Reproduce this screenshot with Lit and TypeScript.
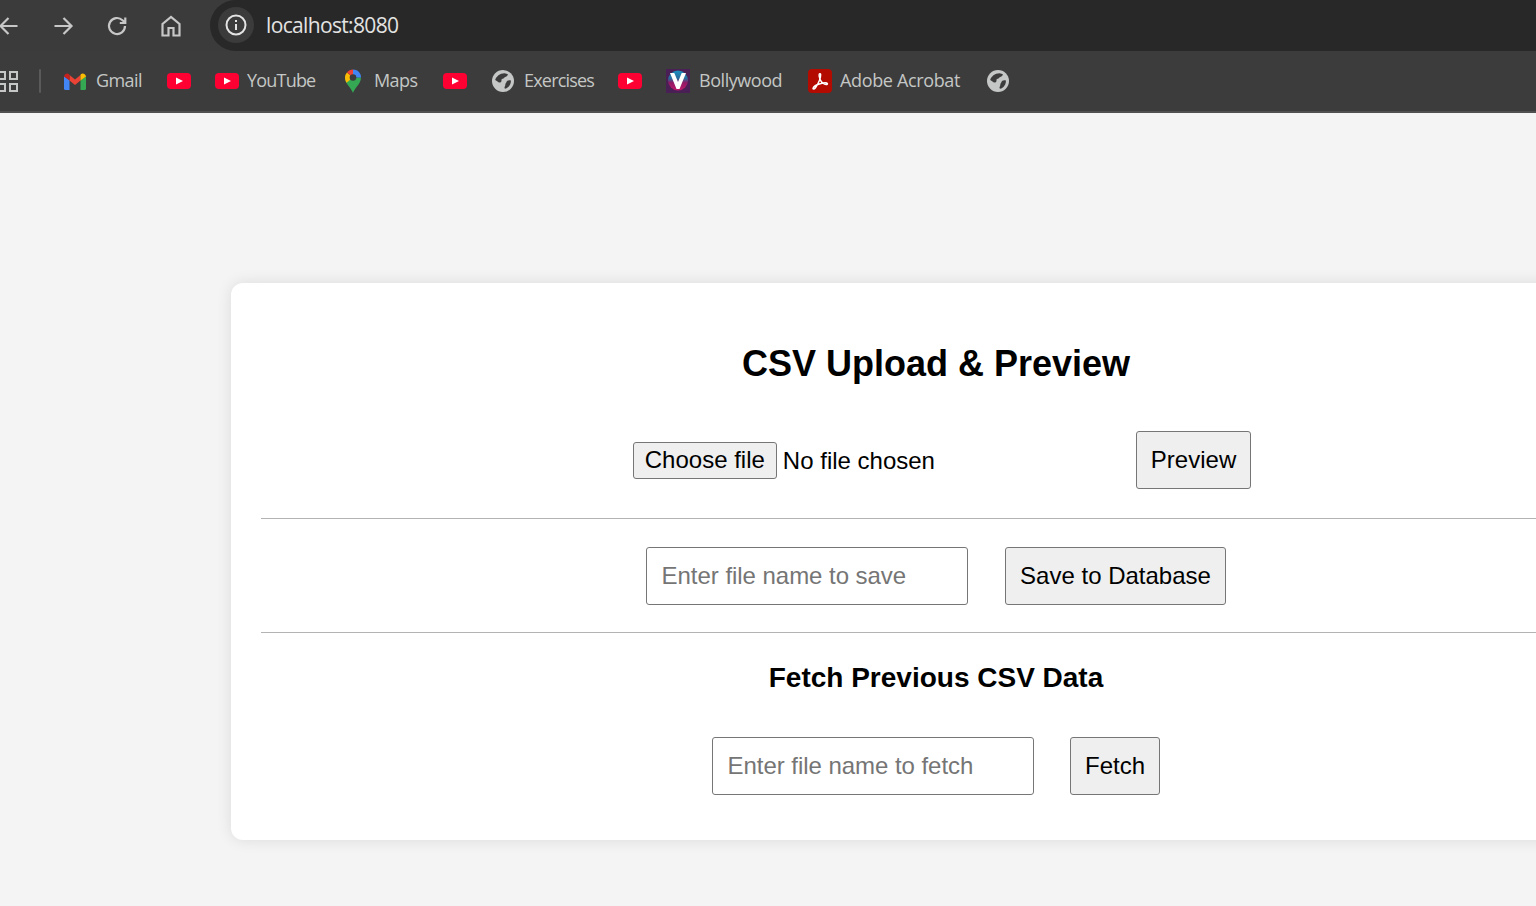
import { LitElement, html, css } from "lit";
import { customElement } from "lit/decorators.js";

const yt = html`<svg class="ic" width="24" height="16" viewBox="0 0 24 16"><rect width="24" height="16" rx="4" fill="#ff0033"/><path d="M9 4.500l7 3.500-7 3.500z" fill="#fff"/></svg>`;
const globe = html`<svg class="ic" width="22" height="22" viewBox="0 0 22 22"><circle cx="11" cy="11" r="11" fill="#c4c7c5"/><path d="M3.200 10C4 6.500 8 3.300 12.500 3.200 14 3.300 15 3.800 16 4.600 15 7 12.800 6.800 11.800 8.300 10.500 8.800 9 9.200 9.500 11 9 13 6.500 13 5.500 11.500 4.800 10.800 4 10.500 3.200 10z" fill="#3c3c3c"/><path d="M18.900 10.500C17 9.800 14.800 10.200 14.300 12.500 12.800 13.500 13.800 15.300 12.800 16.500 12.300 17.500 12.500 18.300 13 18.800 16.500 18 19.200 14.500 18.900 10.500z" fill="#3c3c3c"/></svg>`;
const gmail = html`<svg class="ic" width="22" height="17" viewBox="0 0 22 17"><path d="M0 3.500V15.500A1.500 1.500 0 0 0 1.500 17H5.500V7z" fill="#4285f4"/><path d="M22 3.500V15.500A1.500 1.500 0 0 1 20.500 17H16.500V7z" fill="#34a853"/><path d="M5.500 7.500L11 12l5.500-4.500V2L11 6.500 5.500 2z" fill="#ea4335"/><path d="M0 4C0 1 3 -.5 5 1L5.500 2V7.500L0 3.500z" fill="#c5221f"/><path d="M22 4C22 1 19 -.5 17 1L16.500 2V7.500L22 3.500z" fill="#fbbc04"/></svg>`;
const maps = html`<svg class="ic" width="18" height="24" viewBox="0 0 18 24"><path d="M9 24C7.500 19 1 15 1 8.500h16C17 15 10.500 19 9 24z" fill="#34a853"/><path d="M1 8.500C1 6.500 1.700 5 3 3.500l6 5-6.500 5.300C1.500 12 1 10.500 1 8.500z" fill="#fbbc04"/><path d="M3 3.500C4.500 1.700 6.500.5 9 .5v8z" fill="#ea4335"/><path d="M9 .5c4.500 0 8 3.500 8 8H9z" fill="#4285f4"/><circle cx="9" cy="8.500" r="3.300" fill="#3c3c3c"/></svg>`;
const vicon = html`<svg class="ic" width="24" height="24" viewBox="0 0 24 24"><defs><linearGradient id="vg" x1="0" y1="0" x2="0" y2="1"><stop offset="0" stop-color="#1c8fc0"/><stop offset=".4" stop-color="#2a6a9a"/><stop offset=".6" stop-color="#8f1a66"/><stop offset="1" stop-color="#c0186a"/></linearGradient></defs><rect width="24" height="24" fill="#4a1f55"/><circle cx="12" cy="11.500" r="10" fill="url(#vg)"/><path d="M4 4h4.300L12 13 15.700 4H20L13.500 20h-3z" fill="#fff"/></svg>`;
const acrobat = html`<svg class="ic" width="24" height="24" viewBox="0 0 24 24"><rect width="24" height="24" rx="4" fill="#b30b00"/><path d="M5 19.500C5.500 17 9 15.500 13 14.500c2.500-.7 6-1 6.500.3.300 1-2.500 1-4.500-.5C12.500 12.500 10.500 8 11.200 5.300c.3-1 1.500-1 1.500.5C12.700 9 10 15 7.500 18.800 6.500 20 5 20.500 5 19.500z" fill="none" stroke="#fff" stroke-width="1.400"/></svg>`;

const items = [
  { i: gmail, t: "Gmail", ls: -0.6 },
  { i: yt },
  { i: yt, t: "YouTube", ls: -0.8, g: 8 },
  { i: maps, t: "Maps", ls: -0.6 },
  { i: yt },
  { i: globe, t: "Exercises", ls: -0.8 },
  { i: yt },
  { i: vicon, t: "Bollywood", ls: -0.45 },
  { i: acrobat, t: "Adobe Acrobat", ls: -0.35, g: 8 },
  { i: globe },
];

@customElement("app-root")
export class AppRoot extends LitElement {
  static styles = css`
    :host { display: block; width: 1536px; height: 906px; overflow: hidden; background: #f4f4f4; font-family: "Liberation Sans", Arial, sans-serif; color: #000; }
    .top { height: 51px; background: #3b3b3b; display: flex; align-items: stretch; }
    .nav { width: 210px; flex: none; display: flex; align-items: center; }
    .navbtn { width: 54px; display: flex; justify-content: center; flex: none; }
    .nav svg { fill: none; stroke: #c7c7c7; stroke-width: 2.200; }
    .back { margin-left: -18px; }
    .omni { flex: 1; background: #282828; border-radius: 26px 0 0 26px; display: flex; align-items: center; padding-left: 8px; padding-bottom: 1px; color: #e3e3e3; font: 21px/1 "Open Sans", sans-serif; letter-spacing: -0.65px; }
    .info { width: 36px; height: 36px; border-radius: 50%; background: #3b3b3b; display: flex; align-items: center; justify-content: center; margin-right: 12px; }
    .info svg { fill: none; stroke: #e3e3e3; }
    .bm { height: 60px; background: #3c3c3c; border-bottom: 2px solid #505050; display: flex; align-items: center; color: #c4c7c5; font: 18px/1 "Open Sans", sans-serif; }
    .apps { display: grid; grid-template-columns: 9px 9px; gap: 3px; margin-left: -3px; flex: none; }
    .apps i { width: 9px; height: 9px; border: 2px solid #c4c7c5; box-sizing: border-box; display: block; }
    .sep { flex: none; width: 2px; height: 24px; background: #5a5a5a; margin: 0 22px 0 21px; border-radius: 1px; }
    .marks { display: grid; grid-template-columns: 104px 48px 126px 102px 48px 127px 48px 142px 178px 24px; align-items: center; }
    .item { display: flex; align-items: center; white-space: nowrap; }
    .box { width: 24px; display: flex; justify-content: center; flex: none; }
    .item span { margin-top: -2px; }
    .ic { flex: none; display: block; }
    .card { margin: 170px 0 0 231px; width: 1410px; height: 557px; box-sizing: border-box; background: #fff; border-radius: 12px; box-shadow: 0 0 15px rgba(0,0,0,.1); padding: 0 30px; display: flex; flex-direction: column; align-items: center; }
    h1 { margin: 58px 0 0; font-size: 36px; line-height: 46px; font-weight: 700; white-space: nowrap; }
    .row { display: flex; align-items: center; justify-content: center; width: 100%; }
    .r1 { margin-top: 44px; height: 58px; padding-left: 12px; box-sizing: border-box; }
    .r2 { height: 58px; gap: 37px; }
    hr { width: 100%; margin: 29px 0 28px; border: 0; border-top: 1.500px solid #b3b3b3; height: 0; }
    hr.second { margin: 27px 0 28px; }
    h2 { margin: 0; font-size: 28px; line-height: 34px; font-weight: 700; white-space: nowrap; }
    .r3 { margin-top: 42px; height: 58px; gap: 36px; }
    .choose { height: 37px; padding: 0 11px; font: 24px "Liberation Sans", Arial, sans-serif; background: #efefef; border: 1px solid #767676; border-radius: 3px; color: #000; }
    .nofile { font-size: 24px; margin-left: 6px; width: 353px; position: relative; top: 1px; }
    .btn { height: 58px; padding: 0 14px; box-sizing: border-box; font: 24px "Liberation Sans", Arial, sans-serif; background: #efefef; border: 1px solid #767676; border-radius: 3px; color: #000; }
    input { width: 322px; height: 58px; box-sizing: border-box; padding: 0 14.500px; font: 24px "Liberation Sans", Arial, sans-serif; letter-spacing: -0.04px; border: 1px solid #767676; border-radius: 3px; background: #fff; }
    input::placeholder { color: #757575; }
  `;
  render() {
    return html`
      <div class="top">
        <div class="nav">
          <div class="navbtn back"><svg width="24" height="24" viewBox="0 0 24 24"><path d="M20.500 12H3.500M11.500 4l-8 8 8 8"/></svg></div>
          <div class="navbtn"><svg width="24" height="24" viewBox="0 0 24 24"><path d="M3.500 12h17M12.500 4l8 8-8 8"/></svg></div>
          <div class="navbtn"><svg width="24" height="24" viewBox="0 0 24 24"><path d="M20 12a8 8 0 1 1-2.500-5.800L20 8.500M20.300 3.500v5.500h-5.500"/></svg></div>
          <div class="navbtn"><svg width="24" height="24" viewBox="0 0 24 24"><path d="M3.500 21.500V10L12 3l8.500 7v11.500h-6v-7.500h-5v7.500z"/></svg></div>
        </div>
        <div class="omni">
          <div class="info"><svg width="22" height="22" viewBox="0 0 22 22"><circle cx="11" cy="11" r="9.500" stroke-width="2"/><path d="M11 10v6M11 6v2" stroke-width="2"/></svg></div>
          localhost:8080
        </div>
      </div>
      <div class="bm">
        <div class="apps"><i></i><i></i><i></i><i></i></div>
        <div class="sep"></div>
        <div class="marks">
          ${items.map((x) => html`<div class="item" style="gap:${x.g ?? 9}px"><div class="box">${x.i}</div>${x.t ? html`<span style="letter-spacing:${x.ls}px">${x.t}</span>` : ""}</div>`)}
        </div>
      </div>
      <div class="card">
        <h1>CSV Upload &amp; Preview</h1>
        <div class="row r1">
          <button class="choose">Choose file</button><span class="nofile">No file chosen</span><button class="btn">Preview</button>
        </div>
        <hr />
        <div class="row r2"><input placeholder="Enter file name to save" /><button class="btn">Save to Database</button></div>
        <hr class="second" />
        <h2>Fetch Previous CSV Data</h2>
        <div class="row r3"><input placeholder="Enter file name to fetch" /><button class="btn">Fetch</button></div>
      </div>
    `;
  }
}
